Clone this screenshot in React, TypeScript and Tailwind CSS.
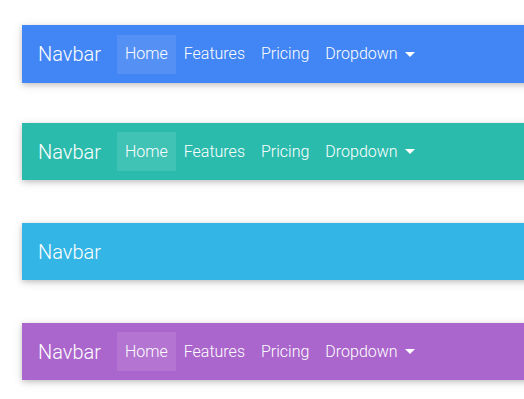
import React from "react";

interface NavbarProps {
  color: string;
  showLinks?: boolean;
  className?: string;
}

const links = ["Home", "Features", "Pricing"];

const Navbar: React.FC<NavbarProps> = ({ color, showLinks = true, className = "" }) => {
  return (
    <nav
      className={`${color} ${className} w-[560px] shrink-0 flex items-center pl-4 text-white shadow-[0_2px_5px_0_rgba(0,0,0,0.16),0_2px_10px_0_rgba(0,0,0,0.12)]`}
    >
      <span className="text-[20px] font-light mr-[16px] leading-none">Navbar</span>
      {showLinks && (
        <ul className="flex items-center text-[16px] font-light">
          {links.map((l, i) => (
            <li
              key={l}
              className={`px-2 h-[39px] flex items-center ${
                i === 0 ? "bg-white/10" : ""
              }`}
            >
              {l}
            </li>
          ))}
          <li className="px-2 h-[39px] flex items-center">
            Dropdown
            {/* Caret */}
            <span className="ml-[7px] inline-block w-0 h-0 border-l-[5px] border-r-[5px] border-t-[5px] border-l-transparent border-r-transparent border-t-white"></span>
          </li>
        </ul>
      )}
    </nav>
  );
};

export default function App() {
  return (
    <div
      className="w-full h-[399px] overflow-hidden bg-white"
      style={{ fontFamily: "Roboto, 'Liberation Sans', sans-serif" }}
    >
      <div className="flex flex-col pt-[25px] pl-[22px]">
        <Navbar color="bg-[#4285f4]" className="h-[58px]" />
        <Navbar color="bg-[#2bbbad]" className="h-[57px] mt-[40px]" />
        <Navbar color="bg-[#33b5e5]" className="h-[57px] mt-[43px]" showLinks={false} />
        <Navbar color="bg-[#aa66cc]" className="h-[57px] mt-[43px]" />
      </div>
    </div>
  );
}
